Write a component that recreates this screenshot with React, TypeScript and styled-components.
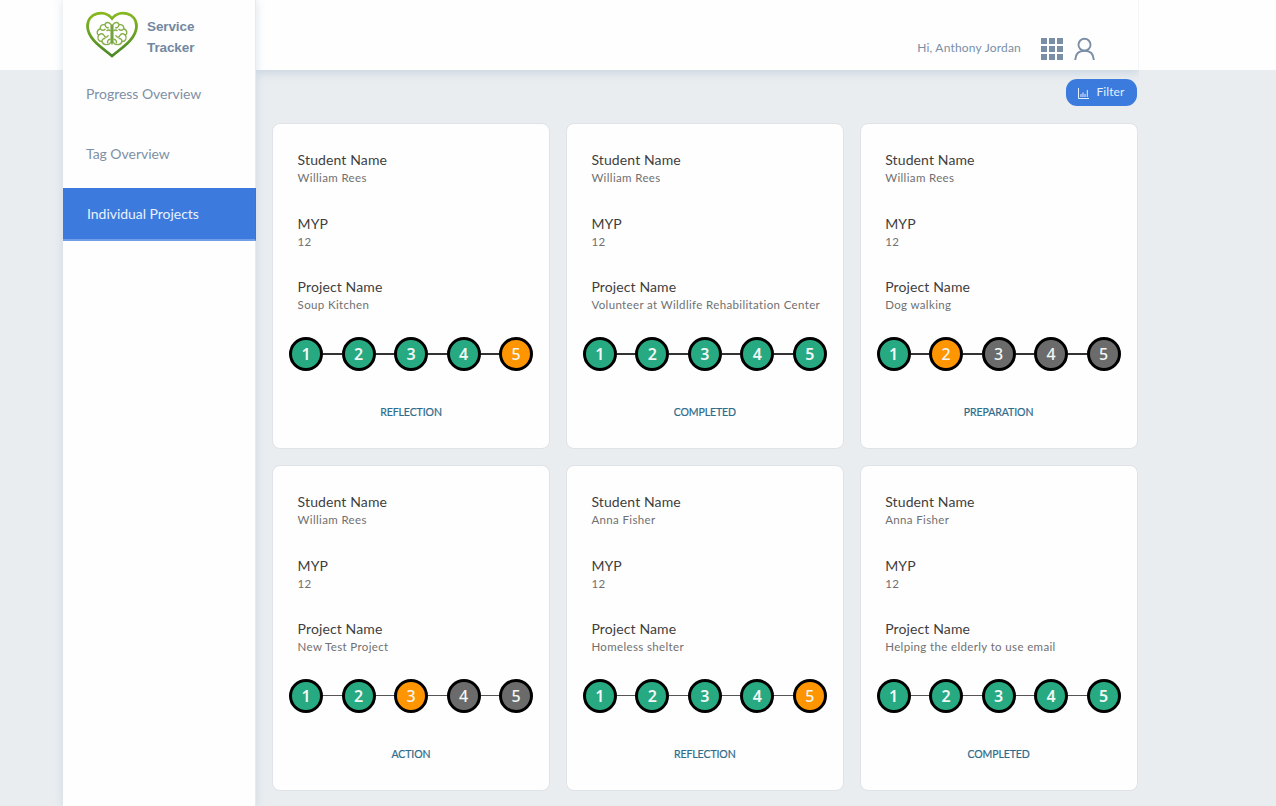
import React from "react";
import styled, { createGlobalStyle } from "styled-components";

const GlobalStyle = createGlobalStyle`
  * { box-sizing: border-box; }
  body {
    margin: 0;
    background: #eaedf0;
    font-family: Lato, "Open Sans", sans-serif;
    overflow: hidden;
  }
`;

const Page = styled.div`
  display: flex;
  height: 806px;
  padding-left: 63px;
  background: linear-gradient(#fefefe 70px, #eaedf0 70px);
`;

const Sidebar = styled.aside`
  flex: none;
  z-index: 2;
  width: 193px;
  background: #fefefe;
  border-right: 1px solid #e4ebf1;
  box-shadow: 0 0 9px rgba(140, 170, 195, 0.32);
`;

const Brand = styled.div`
  display: flex;
  align-items: center;
  gap: 8px;
  height: 67px;
  padding: 3px 0 0 22px;
`;

const BrandName = styled.div`
  padding-top: 3px;
  color: #7388a0;
  font: 700 13.5px/21px "Liberation Sans", sans-serif;
  letter-spacing: -0.1px;
`;

const NavItem = styled.a<{ $active?: boolean }>`
  display: flex;
  align-items: center;
  height: ${(p) => (p.$active ? 53 : 60)}px;
  width: 193px;
  padding: 0 0 ${(p) => (p.$active ? 0 : 8)}px ${(p) => (p.$active ? 24 : 23)}px;
  color: ${(p) => (p.$active ? "#e9f1fd" : "#7e90a5")};
  background: ${(p) => (p.$active ? "#3c7bdd" : "transparent")};
  border-bottom: ${(p) => (p.$active ? "2px solid #719fe7" : "0")};
  border-right: ${(p) => (p.$active ? "1px solid #1d7bff" : "0")};
  font-size: 14px;
  letter-spacing: -0.03px;

  &:last-child {
    margin-top: 1px;
  }
`;

const Body = styled.div`
  width: 883px;
`;

const Header = styled.header`
  display: flex;
  align-items: center;
  justify-content: flex-end;
  height: 70px;
  padding: 28px 43px 0 0;
  color: #7a8fa6;
  background: #fefefe;
  border-right: 1px solid #f4f7fa;
  box-shadow: 0 3px 9px rgba(150, 178, 203, 0.4);
  clip-path: inset(0 0 -14px 0);
`;

const Greeting = styled.span`
  margin-right: 20px;
  padding-bottom: 4px;
  font-size: 12px;
  letter-spacing: 0.2px;
`;

const AppsIcon = styled.svg`
  width: 22px;
  height: 22px;
  margin-right: 11px;
`;

const UserIcon = styled.svg`
  width: 21px;
  height: 24px;
`;

const Toolbar = styled.div`
  display: flex;
  justify-content: flex-end;
  height: 53px;
  padding: 9px 2px 0 0;
`;

const FilterButton = styled.button`
  display: flex;
  align-items: center;
  justify-content: center;
  gap: 7px;
  width: 71px;
  height: 27px;
  padding: 0 0 2px;
  border: 0;
  border-radius: 11px;
  color: #e6effd;
  background: #3b7bde;
  font: 12px Lato, sans-serif;
  letter-spacing: 0.1px;
`;

const ChartIcon = styled.svg`
  width: 11px;
  height: 11px;
  margin-top: 4px;
`;

const Cards = styled.main`
  display: grid;
  grid-template-columns: repeat(3, 278px);
  gap: 16px 15.8px;
  padding-left: 16px;
`;

const CardBox = styled.article`
  height: 326px;
  padding: 27px 16px 0 16px;
  background: #fefefe;
  border: 1px solid #dfe3e7;
  border-radius: 8px;
`;

const Field = styled.div`
  height: 63.5px;
  padding-left: 8.6px;
  white-space: nowrap;
`;

const Label = styled.div`
  color: #3e3e3e;
  font-size: 14px;
  line-height: 18px;
  letter-spacing: 0.12px;
`;

const Value = styled.div`
  color: #707070;
  font-size: 11.5px;
  line-height: 18px;
  letter-spacing: 0.36px;
`;

const Steps = styled.div`
  display: flex;
  align-items: center;
  height: 34px;
  margin-top: -5px;
`;

const fills = { done: "#27a982", current: "#ff9500", todo: "#6b6b6b" };

const Step = styled.div<{ $state: keyof typeof fills }>`
  display: flex;
  align-items: center;
  justify-content: center;
  flex: none;
  width: 34px;
  height: 34px;
  border: 3px solid #000;
  border-radius: 50%;
  color: #f2f8f5;
  background: ${(p) => fills[p.$state]};
  font: ${(p) => (p.$state === "done" ? 600 : 500)} 16px "Noto Sans", sans-serif;
`;

const Line = styled.div<{ $thin: boolean }>`
  flex: 1;
  height: ${(p) => (p.$thin ? 1 : 2)}px;
  background: ${(p) => (p.$thin ? "#555" : "#333")};
`;

const Status = styled.div`
  margin-top: 32.5px;
  color: #2f6b8a;
  text-align: center;
  font-size: 10.5px;
  line-height: 18px;
  letter-spacing: -0.08px;
  -webkit-text-stroke: 0.2px #2f6b8a;
`;

type Project = { student: string; name: string; current: number; status: string };

const projects: Project[] = [
  { student: "William Rees", name: "Soup Kitchen", current: 5, status: "REFLECTION" },
  { student: "William Rees", name: "Volunteer at Wildlife Rehabilitation Center", current: 6, status: "COMPLETED" },
  { student: "William Rees", name: "Dog walking", current: 2, status: "PREPARATION" },
  { student: "William Rees", name: "New Test Project", current: 3, status: "ACTION" },
  { student: "Anna Fisher", name: "Homeless shelter", current: 5, status: "REFLECTION" },
  { student: "Anna Fisher", name: "Helping the elderly to use email", current: 6, status: "COMPLETED" },
];

function Logo() {
  const lobe = (
    <g>
      <path d="M25 15c-2-3-5-2-5.500 0-3-.5-4.500 1.500-4 3.500-3 1-3.500 4-1.500 5.500-1.500 3 0 5.500 3 5.500 1 3.500 6 3.500 8 .5z" />
      <path d="M20 15c0 2 1 3 3 2.500M15.500 18.500c1.500 2 3.500 1.500 4.500 0M14 24c2-2 4-1.500 5 .5s3 1.500 3.500-.5M21 20.500c1-1 2.500-1 3.500 0M17 29.500c0-2 1.500-3 3-2.500M22 31c-.5-2 .5-3.500 2.500-3.500" />
    </g>
  );
  return (
    <svg width="54" height="48" viewBox="0 0 54 48" fill="none">
      <defs>
        <linearGradient id="leaf" x1="0" y1="0" x2="0" y2="1">
          <stop offset="0" stopColor="#86b81d" />
          <stop offset="1" stopColor="#4c8726" />
        </linearGradient>
      </defs>
      <path
        d="M27 45C19 38 3 29 2.500 15.500 2.500 1 20-1.500 27 7.500 34-1.500 51.500 1 51.500 15.500 51 29 35 38 27 45Z"
        stroke="url(#leaf)"
        strokeWidth="2.8"
      />
      <g transform="translate(27 23) scale(1.14 1.16) translate(-27 -23)">
        <g stroke="#84ad45" strokeWidth="1.2">
          <g transform="translate(1.2 0)">{lobe}</g>
          <g transform="translate(52.8 0) scale(-1 1)">{lobe}</g>
        </g>
        <path d="M27 15v17" stroke="#5f932f" strokeWidth="1.2" />
      </g>
    </svg>
  );
}

function ProjectCard({ project, thin }: { project: Project; thin: boolean }) {
  return (
    <CardBox>
      <Field><Label>Student Name</Label><Value>{project.student}</Value></Field>
      <Field><Label>MYP</Label><Value>12</Value></Field>
      <Field><Label>Project Name</Label><Value>{project.name}</Value></Field>
      <Steps>
        {[1, 2, 3, 4, 5].map((n) => (
          <React.Fragment key={n}>
            {n > 1 && <Line $thin={thin} />}
            <Step $state={n < project.current ? "done" : n === project.current ? "current" : "todo"}>{n}</Step>
          </React.Fragment>
        ))}
      </Steps>
      <Status>{project.status}</Status>
    </CardBox>
  );
}

export default function App() {
  return (
    <Page>
      <GlobalStyle />
      <Sidebar>
        <Brand>
          <Logo />
          <BrandName>Service<br />Tracker</BrandName>
        </Brand>
        <NavItem>Progress Overview</NavItem>
        <NavItem>Tag Overview</NavItem>
        <NavItem $active>Individual Projects</NavItem>
      </Sidebar>
      <Body>
        <Header>
          <Greeting>Hi, Anthony Jordan</Greeting>
          <AppsIcon viewBox="0 0 22 22" fill="currentColor">
            {[0, 8, 16].map((y) => [0, 8, 16].map((x) => (
              <rect key={`${x}-${y}`} x={x} y={y} width="6" height="6" />
            )))}
          </AppsIcon>
          <UserIcon viewBox="0 0 22 24" fill="none" stroke="currentColor" strokeWidth="2">
            <circle cx="11" cy="7.5" r="6.3" />
            <path d="M1.200 23.500C1.500 17.500 5 13.800 11 13.800s9.500 3.700 9.800 9.700" />
          </UserIcon>
        </Header>
        <Toolbar>
          <FilterButton>
            <ChartIcon viewBox="0 0 11 11" fill="none" stroke="currentColor">
              <path d="M.5 0v10.500H11M3 9V6M5 9V4.500M7 9V6M9.300 9V2" />
            </ChartIcon>
            Filter
          </FilterButton>
        </Toolbar>
        <Cards>
          {projects.map((project, i) => (
            <ProjectCard key={i} project={project} thin={i > 2} />
          ))}
        </Cards>
      </Body>
    </Page>
  );
}
